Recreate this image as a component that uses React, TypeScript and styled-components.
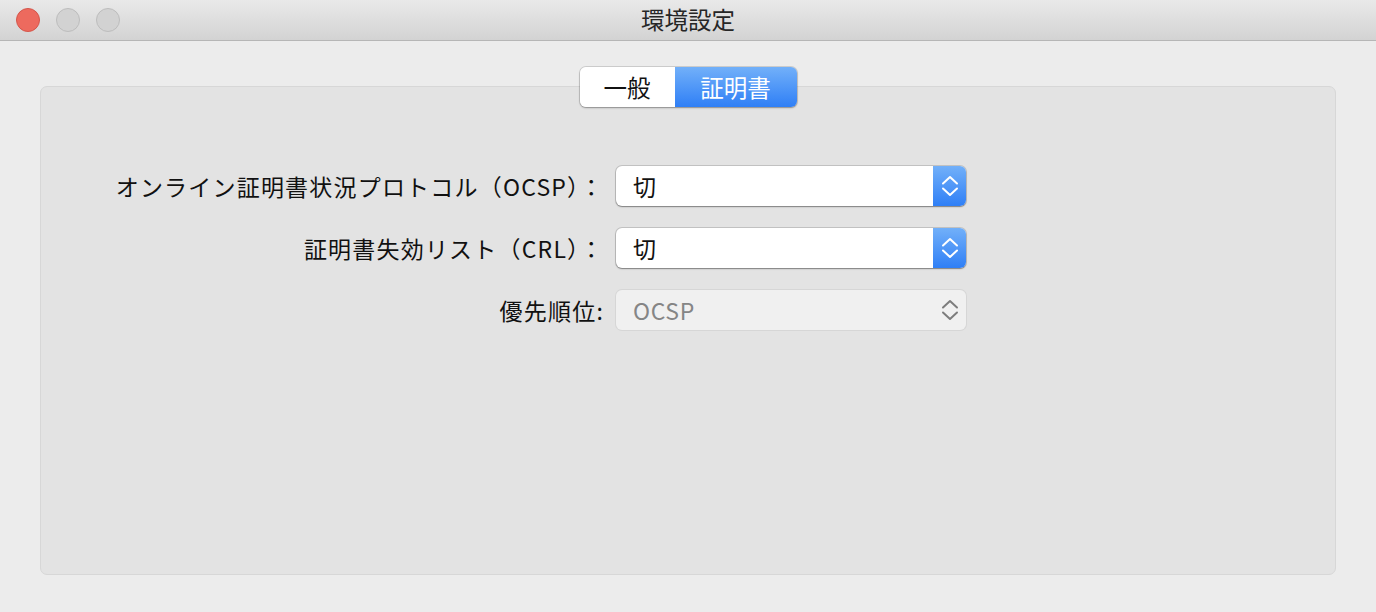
import React from 'react';
import styled, { createGlobalStyle } from 'styled-components';

const FONT = `"Noto Sans CJK JP", "Noto Sans", sans-serif`;

const GlobalStyle = createGlobalStyle`
  html, body {
    margin: 0;
    padding: 0;
    background: #ececec;
  }
  body {
    font-family: ${FONT};
  }
`;

const Window = styled.div`
  width: 1376px;
  height: 612px;
  display: flex;
  flex-direction: column;
  background: #ececec;
  overflow: hidden;
`;

const TitleBar = styled.div`
  position: relative;
  height: 41px;
  flex: none;
  display: flex;
  align-items: center;
  justify-content: center;
  background: linear-gradient(#e9e9e9, #d3d3d3);
  border-bottom: 1px solid #b6b6b6;
  box-sizing: border-box;
`;

const Lights = styled.div`
  position: absolute;
  left: 16px;
  top: 8px;
  display: flex;
  gap: 16px;
`;

const Light = styled.span<{ $red?: boolean }>`
  width: 24px;
  height: 24px;
  border-radius: 50%;
  box-sizing: border-box;
  background: ${({ $red }) => ($red ? '#ed6a5e' : '#d2d2d2')};
  border: 1px solid ${({ $red }) => ($red ? '#d4564b' : '#bdbdbd')};
`;

const Title = styled.div`
  font-size: 23.5px;
  color: #262626;
  line-height: 1;
`;

const Body = styled.div`
  flex: 1;
  display: flex;
  flex-direction: column;
  align-items: center;
  padding: 26px 40px 37px;
`;

const Segmented = styled.div`
  display: flex;
  height: 40px;
  border-radius: 6px;
  box-shadow: 0 0 0 1px rgba(0, 0, 0, 0.12), 0 1px 2px rgba(0, 0, 0, 0.3);
  overflow: hidden;
  margin-bottom: -21px;
  position: relative;
  z-index: 1;
`;

const Segment = styled.div<{ $active?: boolean }>`
  display: flex;
  align-items: center;
  justify-content: center;
  width: ${({ $active }) => ($active ? '122px' : '95px')};
  font-size: 23.5px;
  color: ${({ $active }) => ($active ? '#ffffff' : '#111111')};
  background: ${({ $active }) =>
    $active ? 'linear-gradient(#72b0f9, #2f7ff6)' : '#ffffff'};
`;

const Panel = styled.div`
  align-self: stretch;
  flex: 1;
  background: #e3e3e3;
  border: 1px solid #d7d7d7;
  border-radius: 7px;
  padding: 79px 0 0;
`;

const Form = styled.div`
  display: grid;
  grid-template-columns: 563px 350px;
  column-gap: 12px;
  row-gap: 22px;
  align-items: center;
`;

const Label = styled.div`
  text-align: right;
  font-size: 23px;
  letter-spacing: 1.2px;
  color: #111111;
  white-space: nowrap;
`;

const Popup = styled.div<{ $disabled?: boolean }>`
  height: 40px;
  box-sizing: border-box;
  display: flex;
  align-items: center;
  border-radius: 6px;
  overflow: hidden;
  background: ${({ $disabled }) => ($disabled ? '#f0f0f0' : '#ffffff')};
  box-shadow: ${({ $disabled }) =>
    $disabled
      ? '0 0 0 1px #d6d6d6'
      : '0 0 0 1px rgba(0,0,0,0.14), 0 1px 1.5px rgba(0,0,0,0.35)'};
`;

const PopupValue = styled.div<{ $disabled?: boolean }>`
  flex: 1;
  padding-left: 17px;
  font-size: 23px;
  letter-spacing: 0.6px;
  color: ${({ $disabled }) => ($disabled ? '#858585' : '#111111')};
`;

const Stepper = styled.div<{ $disabled?: boolean }>`
  width: 33px;
  align-self: stretch;
  display: flex;
  align-items: center;
  justify-content: center;
  background: ${({ $disabled }) =>
    $disabled ? 'transparent' : 'linear-gradient(#72b0f9, #2f7ff6)'};
`;

const Chevrons = ({ color }: { color: string }) => (
  <svg width="18" height="24" viewBox="0 0 18 24" fill="none">
    <path d="M2 9.5 L9 3 L16 9.5" stroke={color} strokeWidth="2" strokeLinecap="round" strokeLinejoin="round" />
    <path d="M2 14.5 L9 21 L16 14.5" stroke={color} strokeWidth="2" strokeLinecap="round" strokeLinejoin="round" />
  </svg>
);

interface RowProps {
  label: string;
  value: string;
  disabled?: boolean;
}

const Row = ({ label, value, disabled = false }: RowProps) => (
  <>
    <Label>{label}</Label>
    <Popup $disabled={disabled}>
      <PopupValue $disabled={disabled}>{value}</PopupValue>
      <Stepper $disabled={disabled}>
        <Chevrons color={disabled ? '#7d7d7d' : '#ffffff'} />
      </Stepper>
    </Popup>
  </>
);

const App = () => (
  <>
    <GlobalStyle />
    <Window>
      <TitleBar>
        <Lights>
          <Light $red />
          <Light />
          <Light />
        </Lights>
        <Title>環境設定</Title>
      </TitleBar>
      <Body>
        <Segmented>
          <Segment>一般</Segment>
          <Segment $active>証明書</Segment>
        </Segmented>
        <Panel>
          <Form>
            <Row label="オンライン証明書状況プロトコル（OCSP）：" value="切" />
            <Row label="証明書失効リスト（CRL）：" value="切" />
            <Row label="優先順位:" value="OCSP" disabled />
          </Form>
        </Panel>
      </Body>
    </Window>
  </>
);

export default App;
